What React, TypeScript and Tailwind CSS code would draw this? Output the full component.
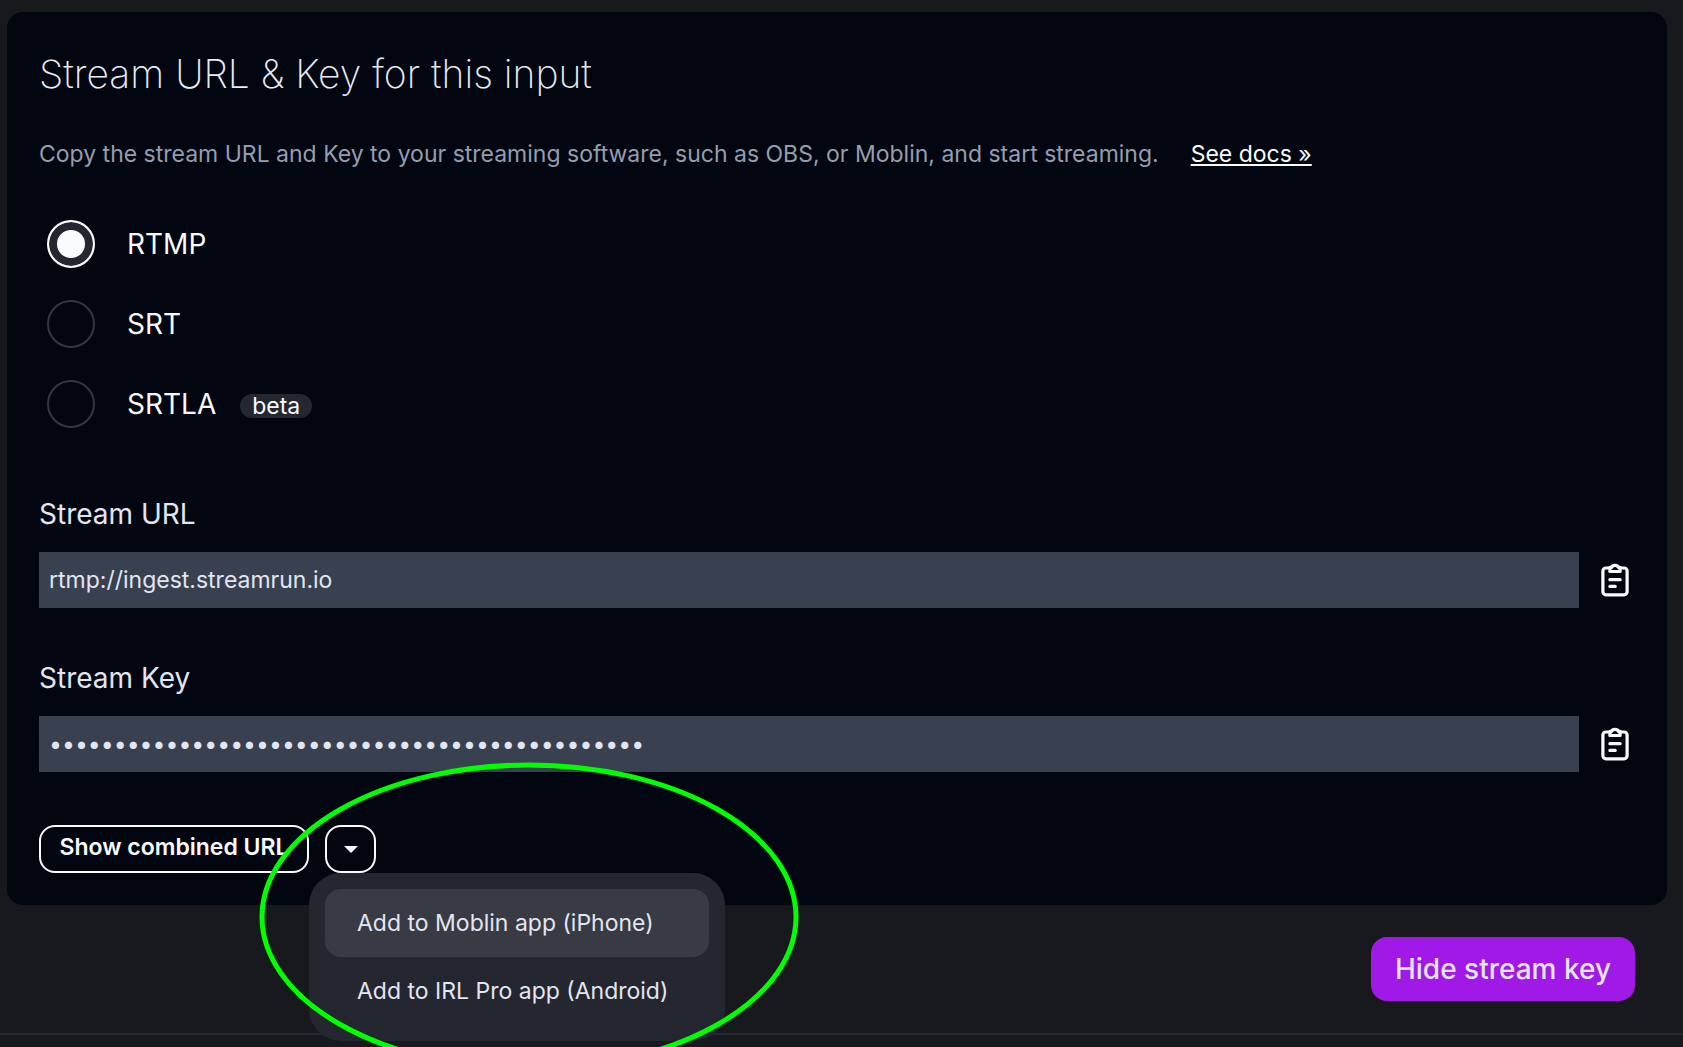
import React from "react";

const protocols = [
  { id: "rtmp", label: "RTMP" },
  { id: "srt", label: "SRT" },
  { id: "srtla", label: "SRTLA", badge: "beta" },
];

function ClipboardIcon() {
  return (
    <svg viewBox="0 0 30 36" className="h-9 w-[30px]" fill="none" stroke="currentColor" strokeWidth="3.2" strokeLinecap="round" strokeLinejoin="round" aria-hidden="true">
      <path d="M9.900 6H5.900A3 3 0 0 0 2.900 9v20.800a3 3 0 0 0 3 3h18.200a3 3 0 0 0 3-3V9a3 3 0 0 0-3-3H20.100" />
      <path d="M9.900 5.400h1.700a3.500 2.700 0 0 1 6.800 0h1.700V9.500H9.900z" />
      <path d="M9.900 17.700h10.200M9.900 24.400h5.300" />
    </svg>
  );
}

function Field({ id, label, type, value }: { id: string; label: string; type: string; value: string }) {
  return (
    <div className="flex flex-col gap-5">
      <label htmlFor={id} className="self-start text-[28px] leading-9 text-[#e2e5f2]">{label}</label>
      <div className="flex items-center">
        <input id={id} type={type} readOnly defaultValue={value} className="h-14 min-w-0 flex-1 bg-[#394150] px-2.5 text-[23px] text-[#e2e5f2] outline-none" />
        <button type="button" aria-label={`Copy ${label}`} className="flex w-14 justify-end pr-[5px] pl-5 text-[#fafbff]">
          <ClipboardIcon />
        </button>
      </div>
    </div>
  );
}

export default function App() {
  return (
    <main className="min-h-screen overflow-hidden bg-[#18191d] font-['Inter',sans-serif] text-[#fafbff]">
      <div className="pt-3 pr-4 pb-8 pl-[7px]">
        <section className="rounded-2xl bg-[#020610] p-8">
          <h1 className="mt-1 text-[39px] leading-[52px] font-extralight text-[#e9ebf5]">Stream URL &amp; Key for this input</h1>
          <p className="mt-[34px] text-[23px] leading-10 text-[#949eb0]">
            Copy the stream URL and Key to your streaming software, such as OBS, or Moblin, and start streaming.
            <a href="#docs" className="ml-8 text-[#fafbff] underline decoration-2 underline-offset-2">See docs »</a>
          </p>
          <fieldset aria-label="Protocol" className="mt-[38px] ml-2 flex flex-col gap-4">
            {protocols.map((p) => (
              <label key={p.id} className="flex h-16 items-center">
                <input
                  type="radio"
                  name="protocol"
                  defaultChecked={p.id === "rtmp"}
                  className="size-12 appearance-none rounded-full border-2 border-[#34373f] checked:border-[#fafbff] checked:bg-[#fafbff] checked:shadow-[inset_0_0_0_8px_#24272f]"
                />
                <span className="ml-8 text-[28px] leading-9">{p.label}</span>
                {p.badge && <span className="mt-1 ml-6 rounded-full bg-[#24272f] px-3 text-[23px] leading-6">{p.badge}</span>}
              </label>
            ))}
          </fieldset>
          <div className="mt-[60px] flex flex-col gap-[52px]">
            <Field id="stream-url" label="Stream URL" type="text" value="rtmp://ingest.streamrun.io" />
            <Field id="stream-key" label="Stream Key" type="password" value="live-0a1b2c3d4e5f6a7b8c9d0e1f2a3b4c5d6e7f8a9b0" />
          </div>
          <div className="mt-[53px] flex gap-4">
            <button type="button" className="h-12 w-[270px] rounded-2xl border-2 border-[#fafbff] pb-1 text-[23px] font-semibold whitespace-nowrap">Show combined URL</button>
            <div className="relative">
              <button type="button" aria-label="More options" aria-expanded="true" className="flex h-12 w-[51px] items-center justify-center rounded-2xl border-2 border-[#fafbff]">
                <svg viewBox="0 0 14 7" className="h-[7px] w-3.5" fill="currentColor" aria-hidden="true"><path d="M0 0h14L7 7z" /></svg>
              </button>
              <div role="menu" className="absolute top-12 -left-4 flex w-[416px] flex-col rounded-[32px] bg-[#24272f] p-4 text-[23px] whitespace-nowrap text-[#e2e5f2]">
                <button type="button" role="menuitem" className="h-[68px] rounded-2xl bg-[#383b43] px-8 text-left">Add to Moblin app (iPhone)</button>
                <button type="button" role="menuitem" className="h-[68px] rounded-2xl px-8 text-left">Add to IRL Pro app (Android)</button>
              </div>
              <svg viewBox="0 0 540 310" className="pointer-events-none absolute -top-[63px] -left-[66px] h-[310px] w-[540px]" fill="none" aria-hidden="true">
                <ellipse cx="270" cy="155" rx="267" ry="152" stroke="#00ff00" strokeWidth="5" />
              </svg>
            </div>
          </div>
        </section>
        <div className="mt-8 flex justify-end pr-8">
          <button type="button" className="h-16 rounded-2xl bg-[#a019e6] px-6 text-[28px] font-medium text-[#e2e5f2]">Hide stream key</button>
        </div>
      </div>
      <hr className="border-t-2 border-[#1f2a37]" />
    </main>
  );
}
